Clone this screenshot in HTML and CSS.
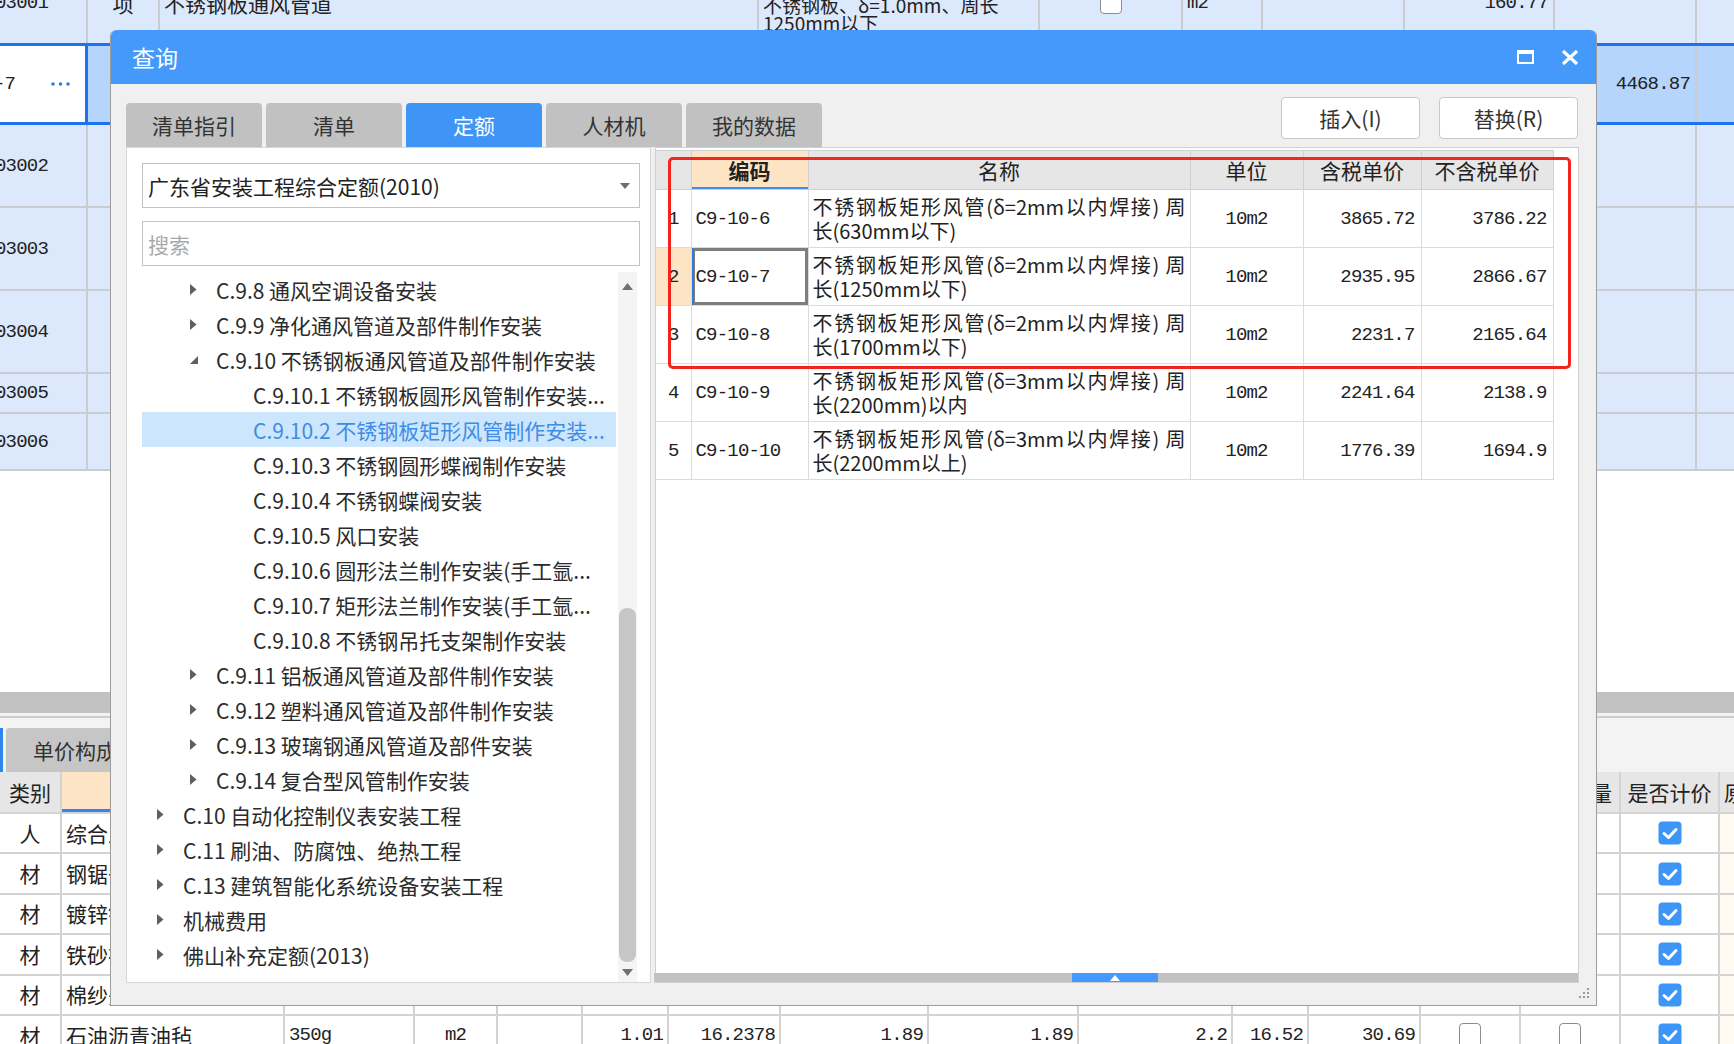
FILE: index.html
```html
<!DOCTYPE html>
<html lang="zh-CN">
<head>
<meta charset="utf-8">
<title>查询</title>
<link rel="stylesheet" href="styles.css">
</head>
<body>
<div class="app">
  <div class="top-grid">
    <div class="trow r0">
      <div class="c c0 m cut">03001</div>
      <div class="c center">项</div>
      <div class="c">不锈钢板通风管道</div>
      <div class="c two"><span>不锈钢板、δ=1.0mm、周长</span><span>1250mm以下</span></div>
      <div class="c center"><span class="cb-empty"></span></div>
      <div class="c m">m2</div>
      <div class="c"></div>
      <div class="c m right">160.77</div>
      <div class="c"></div>
      <div class="c"></div>
    </div>
    <div class="trow r1">
      <div class="c c0 edit"><span class="m cut2">-7</span><svg class="dots" width="19" height="4" viewBox="0 0 19 4"><circle cx="2" cy="2" r="1.8"/><circle cx="9.5" cy="2" r="1.8"/><circle cx="17" cy="2" r="1.8"/></svg></div>
      <div class="c"></div>
      <div class="c"></div>
      <div class="c"></div>
      <div class="c"></div>
      <div class="c"></div>
      <div class="c"></div>
      <div class="c"></div>
      <div class="c m right">4468.87</div>
      <div class="c"></div>
    </div>
    <div class="trow r2">
      <div class="c c0 m cut">03002</div>
      <div class="c"></div><div class="c"></div><div class="c"></div><div class="c"></div><div class="c"></div><div class="c"></div><div class="c"></div><div class="c"></div><div class="c"></div>
    </div>
    <div class="trow r2">
      <div class="c c0 m cut">03003</div>
      <div class="c"></div><div class="c"></div><div class="c"></div><div class="c"></div><div class="c"></div><div class="c"></div><div class="c"></div><div class="c"></div><div class="c"></div>
    </div>
    <div class="trow r2">
      <div class="c c0 m cut">03004</div>
      <div class="c"></div><div class="c"></div><div class="c"></div><div class="c"></div><div class="c"></div><div class="c"></div><div class="c"></div><div class="c"></div><div class="c"></div>
    </div>
    <div class="trow r5">
      <div class="c c0 m cut">03005</div>
      <div class="c"></div><div class="c"></div><div class="c"></div><div class="c"></div><div class="c"></div><div class="c"></div><div class="c"></div><div class="c"></div><div class="c"></div>
    </div>
    <div class="trow r6">
      <div class="c c0 m cut">03006</div>
      <div class="c"></div><div class="c"></div><div class="c"></div><div class="c"></div><div class="c"></div><div class="c"></div><div class="c"></div><div class="c"></div><div class="c"></div>
    </div>
  </div>

  <div class="blank"></div>
  <div class="splitter"></div>

  <div class="lower-tabs">
    <span class="ltab-mark"></span>
    <div class="ltab">单价构成</div>
  </div>

  <div class="bottom-grid">
    <div class="brow bhead">
      <div class="c center">类别</div>
      <div class="c peach"></div>
      <div class="c"></div><div class="c"></div><div class="c"></div><div class="c"></div><div class="c"></div><div class="c"></div><div class="c"></div><div class="c"></div><div class="c"></div><div class="c"></div><div class="c"></div>
      <div class="c qty">锁定数量</div>
      <div class="c center">是否计价</div>
      <div class="c">原价</div>
    </div>
    <div class="brow">
      <div class="c center">人</div><div class="c">综合工日</div>
      <div class="c"></div><div class="c"></div><div class="c"></div><div class="c"></div><div class="c"></div><div class="c"></div><div class="c"></div><div class="c"></div><div class="c"></div><div class="c"></div><div class="c"></div><div class="c"></div>
      <div class="c center"><svg class="cbx" width="24" height="24" viewBox="0 0 24 24"><rect x="0.5" y="0.5" width="23" height="23" rx="4" fill="#3d95f7"/><path d="M6 12.5 L10.5 16.5 L18 8.5" fill="none" stroke="#fff" stroke-width="3" stroke-linecap="round" stroke-linejoin="round"/></svg></div>
      <div class="c tint"></div>
    </div>
    <div class="brow">
      <div class="c center">材</div><div class="c">钢锯条</div>
      <div class="c"></div><div class="c"></div><div class="c"></div><div class="c"></div><div class="c"></div><div class="c"></div><div class="c"></div><div class="c"></div><div class="c"></div><div class="c"></div><div class="c"></div><div class="c"></div>
      <div class="c center"><svg class="cbx" width="24" height="24" viewBox="0 0 24 24"><rect x="0.5" y="0.5" width="23" height="23" rx="4" fill="#3d95f7"/><path d="M6 12.5 L10.5 16.5 L18 8.5" fill="none" stroke="#fff" stroke-width="3" stroke-linecap="round" stroke-linejoin="round"/></svg></div>
      <div class="c tint"></div>
    </div>
    <div class="brow">
      <div class="c center">材</div><div class="c">镀锌铁丝</div>
      <div class="c"></div><div class="c"></div><div class="c"></div><div class="c"></div><div class="c"></div><div class="c"></div><div class="c"></div><div class="c"></div><div class="c"></div><div class="c"></div><div class="c"></div><div class="c"></div>
      <div class="c center"><svg class="cbx" width="24" height="24" viewBox="0 0 24 24"><rect x="0.5" y="0.5" width="23" height="23" rx="4" fill="#3d95f7"/><path d="M6 12.5 L10.5 16.5 L18 8.5" fill="none" stroke="#fff" stroke-width="3" stroke-linecap="round" stroke-linejoin="round"/></svg></div>
      <div class="c tint"></div>
    </div>
    <div class="brow">
      <div class="c center">材</div><div class="c">铁砂布</div>
      <div class="c"></div><div class="c"></div><div class="c"></div><div class="c"></div><div class="c"></div><div class="c"></div><div class="c"></div><div class="c"></div><div class="c"></div><div class="c"></div><div class="c"></div><div class="c"></div>
      <div class="c center"><svg class="cbx" width="24" height="24" viewBox="0 0 24 24"><rect x="0.5" y="0.5" width="23" height="23" rx="4" fill="#3d95f7"/><path d="M6 12.5 L10.5 16.5 L18 8.5" fill="none" stroke="#fff" stroke-width="3" stroke-linecap="round" stroke-linejoin="round"/></svg></div>
      <div class="c tint"></div>
    </div>
    <div class="brow">
      <div class="c center">材</div><div class="c">棉纱头</div>
      <div class="c"></div><div class="c"></div><div class="c"></div><div class="c"></div><div class="c"></div><div class="c"></div><div class="c"></div><div class="c"></div><div class="c"></div><div class="c"></div><div class="c"></div><div class="c"></div>
      <div class="c center"><svg class="cbx" width="24" height="24" viewBox="0 0 24 24"><rect x="0.5" y="0.5" width="23" height="23" rx="4" fill="#3d95f7"/><path d="M6 12.5 L10.5 16.5 L18 8.5" fill="none" stroke="#fff" stroke-width="3" stroke-linecap="round" stroke-linejoin="round"/></svg></div>
      <div class="c tint"></div>
    </div>
    <div class="brow">
      <div class="c center">材</div><div class="c">石油沥青油毡</div>
      <div class="c m">350g</div>
      <div class="c m center">m2</div>
      <div class="c"></div>
      <div class="c m right">1.01</div>
      <div class="c m right">16.2378</div>
      <div class="c m right">1.89</div>
      <div class="c m right">1.89</div>
      <div class="c m right">2.2</div>
      <div class="c m right">16.52</div>
      <div class="c m right">30.69</div>
      <div class="c center"><span class="cb-empty tall"></span></div>
      <div class="c center"><span class="cb-empty tall"></span></div>
      <div class="c center"><svg class="cbx" width="24" height="24" viewBox="0 0 24 24"><rect x="0.5" y="0.5" width="23" height="23" rx="4" fill="#3d95f7"/><path d="M6 12.5 L10.5 16.5 L18 8.5" fill="none" stroke="#fff" stroke-width="3" stroke-linecap="round" stroke-linejoin="round"/></svg></div>
      <div class="c tint"></div>
    </div>
  </div>
</div>

<div class="dialog">
  <div class="titlebar">
    <div class="title">查询</div>
    <svg class="tb-max" width="17" height="14" viewBox="0 0 17 14"><rect x="1" y="2" width="15" height="11" fill="none" stroke="#fff" stroke-width="2"/><rect x="0" y="0" width="17" height="4" fill="#fff"/></svg>
    <svg class="tb-close" width="18" height="15" viewBox="0 0 18 15"><path d="M2 1 L16 14 M16 1 L2 14" stroke="#fff" stroke-width="3.2" stroke-linecap="butt"/></svg>
  </div>
  <div class="dbody">
    <div class="toolbar">
      <div class="tabs">
        <div class="tab">清单指引</div>
        <div class="tab">清单</div>
        <div class="tab active">定额</div>
        <div class="tab">人材机</div>
        <div class="tab">我的数据</div>
      </div>
      <div class="actions">
        <div class="btn">插入(I)</div>
        <div class="btn">替换(R)</div>
      </div>
    </div>
    <div class="main">
      <div class="lpanel">
        <div class="select">
          <span>广东省安装工程综合定额(2010)</span>
          <svg width="10" height="6" viewBox="0 0 10 6"><path d="M0 0 H10 L5 6 Z" fill="#6e6e6e"/></svg>
        </div>
        <div class="search">搜索</div>
        <div class="tree-area">
          <div class="tree">
            <div class="node l2"><span class="arr"><svg width="7" height="11" viewBox="0 0 7 11"><path d="M0 0 L6.5 5.5 L0 11 Z" fill="#5f5f5f"/></svg></span>C.9.8 通风空调设备安装</div>
            <div class="node l2"><span class="arr"><svg width="7" height="11" viewBox="0 0 7 11"><path d="M0 0 L6.5 5.5 L0 11 Z" fill="#5f5f5f"/></svg></span>C.9.9 净化通风管道及部件制作安装</div>
            <div class="node l2"><span class="arr"><svg width="8" height="8" viewBox="0 0 8 8"><path d="M8 0 L8 8 L0 8 Z" fill="#5f5f5f"/></svg></span>C.9.10 不锈钢板通风管道及部件制作安装</div>
            <div class="node l3">C.9.10.1 不锈钢板圆形风管制作安装...</div>
            <div class="node l3 sel">C.9.10.2 不锈钢板矩形风管制作安装...</div>
            <div class="node l3">C.9.10.3 不锈钢圆形蝶阀制作安装</div>
            <div class="node l3">C.9.10.4 不锈钢蝶阀安装</div>
            <div class="node l3">C.9.10.5 风口安装</div>
            <div class="node l3">C.9.10.6 圆形法兰制作安装(手工氩...</div>
            <div class="node l3">C.9.10.7 矩形法兰制作安装(手工氩...</div>
            <div class="node l3">C.9.10.8 不锈钢吊托支架制作安装</div>
            <div class="node l2"><span class="arr"><svg width="7" height="11" viewBox="0 0 7 11"><path d="M0 0 L6.5 5.5 L0 11 Z" fill="#5f5f5f"/></svg></span>C.9.11 铝板通风管道及部件制作安装</div>
            <div class="node l2"><span class="arr"><svg width="7" height="11" viewBox="0 0 7 11"><path d="M0 0 L6.5 5.5 L0 11 Z" fill="#5f5f5f"/></svg></span>C.9.12 塑料通风管道及部件制作安装</div>
            <div class="node l2"><span class="arr"><svg width="7" height="11" viewBox="0 0 7 11"><path d="M0 0 L6.5 5.5 L0 11 Z" fill="#5f5f5f"/></svg></span>C.9.13 玻璃钢通风管道及部件安装</div>
            <div class="node l2"><span class="arr"><svg width="7" height="11" viewBox="0 0 7 11"><path d="M0 0 L6.5 5.5 L0 11 Z" fill="#5f5f5f"/></svg></span>C.9.14 复合型风管制作安装</div>
            <div class="node l1"><span class="arr"><svg width="7" height="11" viewBox="0 0 7 11"><path d="M0 0 L6.5 5.5 L0 11 Z" fill="#5f5f5f"/></svg></span>C.10 自动化控制仪表安装工程</div>
            <div class="node l1"><span class="arr"><svg width="7" height="11" viewBox="0 0 7 11"><path d="M0 0 L6.5 5.5 L0 11 Z" fill="#5f5f5f"/></svg></span>C.11 刷油、防腐蚀、绝热工程</div>
            <div class="node l1"><span class="arr"><svg width="7" height="11" viewBox="0 0 7 11"><path d="M0 0 L6.5 5.5 L0 11 Z" fill="#5f5f5f"/></svg></span>C.13 建筑智能化系统设备安装工程</div>
            <div class="node l1"><span class="arr"><svg width="7" height="11" viewBox="0 0 7 11"><path d="M0 0 L6.5 5.5 L0 11 Z" fill="#5f5f5f"/></svg></span>机械费用</div>
            <div class="node l1"><span class="arr"><svg width="7" height="11" viewBox="0 0 7 11"><path d="M0 0 L6.5 5.5 L0 11 Z" fill="#5f5f5f"/></svg></span>佛山补充定额(2013)</div>
          </div>
          <div class="vscroll">
            <div class="sb-up"><svg width="11" height="7" viewBox="0 0 11 7"><path d="M0 7 L5.5 0 L11 7 Z" fill="#707070"/></svg></div>
            <div class="sb-gap"></div>
            <div class="sb-thumb"></div>
            <div class="sb-down"><svg width="11" height="7" viewBox="0 0 11 7"><path d="M0 0 L11 0 L5.5 7 Z" fill="#707070"/></svg></div>
          </div>
        </div>
      </div>
      <div class="rpanel">
        <div class="grid-area">
          <table class="qt">
            <colgroup><col class="w-no"><col class="w-code"><col class="w-name"><col class="w-unit"><col class="w-p1"><col class="w-p2"></colgroup>
            <thead>
              <tr><th></th><th class="hcode">编码</th><th>名称</th><th>单位</th><th>含税单价</th><th>不含税单价</th></tr>
            </thead>
            <tbody>
              <tr><td class="no m">1</td><td class="m code">C9-10-6</td><td class="name"><span class="l1">不锈钢板矩形风管(δ=2mm以内焊接) 周</span><span>长(630mm以下)</span></td><td class="m unit">10m2</td><td class="m num">3865.72</td><td class="m num">3786.22</td></tr>
              <tr><td class="no m cur">2</td><td class="m code curcell">C9-10-7</td><td class="name"><span class="l1">不锈钢板矩形风管(δ=2mm以内焊接) 周</span><span>长(1250mm以下)</span></td><td class="m unit">10m2</td><td class="m num">2935.95</td><td class="m num">2866.67</td></tr>
              <tr><td class="no m">3</td><td class="m code">C9-10-8</td><td class="name"><span class="l1">不锈钢板矩形风管(δ=2mm以内焊接) 周</span><span>长(1700mm以下)</span></td><td class="m unit">10m2</td><td class="m num">2231.7</td><td class="m num">2165.64</td></tr>
              <tr><td class="no m">4</td><td class="m code">C9-10-9</td><td class="name"><span class="l1">不锈钢板矩形风管(δ=3mm以内焊接) 周</span><span>长(2200mm)以内</span></td><td class="m unit">10m2</td><td class="m num">2241.64</td><td class="m num">2138.9</td></tr>
              <tr><td class="no m">5</td><td class="m code">C9-10-10</td><td class="name"><span class="l1">不锈钢板矩形风管(δ=3mm以内焊接) 周</span><span>长(2200mm以上)</span></td><td class="m unit">10m2</td><td class="m num">1776.39</td><td class="m num">1694.9</td></tr>
            </tbody>
          </table>
        </div>
        <div class="hscroll"><div class="hs-gap"></div><div class="hs-thumb"><svg width="10" height="6" viewBox="0 0 10 6"><path d="M0 6 L5 0 L10 6 Z" fill="#fff"/></svg></div></div>
      </div>
    </div>
    <svg class="grip" width="12" height="12" viewBox="0 0 12 12"><g fill="#9a9a9a"><rect x="9" y="1" width="2" height="2"/><rect x="9" y="5" width="2" height="2"/><rect x="5" y="5" width="2" height="2"/><rect x="9" y="9" width="2" height="2"/><rect x="5" y="9" width="2" height="2"/><rect x="1" y="9" width="2" height="2"/></g></svg>
  </div>
  <div class="redbox"></div>
</div>
</body>
</html>
```

FILE: styles.css
```css
* { box-sizing: border-box; }
html, body { margin: 0; padding: 0; }
body {
  width: 1734px;
  height: 1044px;
  overflow: hidden;
  position: relative;
  background: #ffffff;
  font-family: "Noto Sans CJK SC", "Noto Sans", sans-serif;
  color: #222222;
}
.m {
  font-family: "Liberation Mono", "Noto Sans CJK SC", monospace;
  font-size: 19px;
  letter-spacing: -0.8px;
}
.center { justify-content: center; text-align: center; }
.right { justify-content: flex-end; text-align: right; }

/* ===== background upper grid ===== */
.top-grid { margin-top: -37px; }
.trow {
  display: grid;
  grid-template-columns: 88px 72px 599px 281px 143px 80px 142px 150px 142px 1fr;
  background: #dce8fb;
  border-bottom: 2px solid #c9cdd3;
  font-size: 21px;
}
.trow .c {
  border-right: 2px solid #c9cdd3;
  display: flex;
  align-items: center;
  padding: 0 4px;
  overflow: hidden;
  white-space: nowrap;
}
.trow .c:last-child { border-right: none; }
.trow .c.m { font-size: 19px; }
.trow .c.right { padding-right: 5px; }
.trow .cut { padding-left: 0; text-indent: -5px; }
.trow .two {
  flex-direction: column;
  align-items: flex-start;
  justify-content: flex-end;
  padding-bottom: 11px;
  line-height: 18px;
  font-size: 19px;
}
.r0 { height: 80px; border-bottom: none; }
.r1 {
  height: 82px;
  border-top: 3px solid #1f72ef;
  border-bottom: 3px solid #1f72ef;
  background: #b5d5fc;
}
.r1 .c0.edit {
  background: #ffffff;
  border-right: 3px solid #1f72ef;
  padding: 0;
  justify-content: space-between;
}
.cut2 { margin-left: -6px; }
.dots { fill: #2f7ae2; margin-right: 15px; }
.r2 { height: 83px; }
.r5 { height: 40px; }
.r6 { height: 57px; }
.cb-empty {
  display: inline-block;
  width: 22px;
  height: 22px;
  background: #ffffff;
  border: 1.5px solid #8c8c8c;
  border-radius: 4px;
}
.cb-empty.tall { width: 22px; height: 25px; }

.blank { height: 221px; }
.splitter {
  height: 26px;
  background: linear-gradient(to bottom, #c2c2c2 0, #c2c2c2 21px, #f2f2f2 21px, #f2f2f2 24px, #cdcdcd 24px);
}
.lower-tabs {
  height: 54px;
  background: #f3f3f3;
  display: flex;
  align-items: flex-end;
}
.ltab-mark { width: 3px; height: 44px; background: #2f86f0; }
.ltab {
  margin-left: 3px;
  width: 140px;
  height: 44px;
  background: #c6c6c6;
  border-radius: 3px 3px 0 0;
  font-size: 21px;
  color: #333;
  display: flex;
  align-items: center;
  padding-left: 27px;
}

/* ===== background lower grid ===== */
.brow {
  display: grid;
  grid-template-columns: 62px 223px 130px 83px 85px 86px 112px 148px 150px 154px 76px 112px 100px 100px 99px 1fr;
  height: 40.4px;
  border-bottom: 2px solid #d3d3d3;
  font-size: 21px;
  background: #ffffff;
}
.brow .c {
  border-right: 2px solid #d3d3d3;
  display: flex;
  align-items: center;
  padding: 0 4px;
  overflow: hidden;
  white-space: nowrap;
  line-height: 1;
}
.brow .c:last-child { border-right: none; }
.brow .c.right { padding-right: 4px; }
.bhead { height: 42px; background: #e6e6e6; border-bottom: 2px solid #d3d3d3; }
.bhead .peach { background: #fde4c4; box-shadow: inset 0 -3px 0 #2f86f0; }
.bhead .qty { justify-content: flex-end; padding-right: 7px; }
.tint { background: #fffaf2; }
.bhead .tint { background: #e6e6e6; }
.cbx { display: block; }

/* ===== dialog ===== */
.dialog {
  position: absolute;
  left: 110px;
  top: 30px;
  width: 1487px;
  height: 976px;
  background: #f0f0f0;
  border: 1px solid #9d9d9d;
  border-top: none;
  border-radius: 6px 6px 0 0;
  display: flex;
  flex-direction: column;
}
.titlebar {
  height: 54px;
  flex: none;
  background: #4599fb;
  border-radius: 6px 6px 0 0;
  display: flex;
  align-items: center;
  padding: 0 17px 0 21px;
  color: #ffffff;
}
.title { flex: 1; font-size: 23px; }
.tb-max { margin-right: 27px; }
.dbody {
  flex: 1;
  display: flex;
  flex-direction: column;
  padding: 13px 17px 22px 15px;
  position: relative;
}
.toolbar {
  height: 50px;
  flex: none;
  display: flex;
  justify-content: space-between;
}
.tabs { display: flex; gap: 4px; align-self: flex-end; }
.tab {
  width: 136px;
  height: 44px;
  background: #c1c1c1;
  border-radius: 4px 4px 0 0;
  font-size: 21px;
  color: #333333;
  display: flex;
  align-items: center;
  justify-content: center;
}
.tab.active { background: #3e95f6; color: #ffffff; }
.actions { display: flex; gap: 19px; align-self: flex-start; margin-right: 1px; }
.btn {
  width: 139px;
  height: 42px;
  background: #ffffff;
  border: 1px solid #c8c8c8;
  border-radius: 4px;
  font-size: 21px;
  color: #333333;
  display: flex;
  align-items: center;
  justify-content: center;
}
.main { flex: 1; display: flex; gap: 4px; min-height: 0; }

.lpanel {
  width: 525px;
  flex: none;
  background: #ffffff;
  border: 1px solid #d7d7d7;
  padding: 15px 10px 0 15px;
  display: flex;
  flex-direction: column;
}
.select, .search {
  height: 45px;
  border: 1px solid #c2c2c2;
  font-size: 21px;
  display: flex;
  align-items: center;
  padding: 0 9px 0 5px;
  flex: none;
}
.select { justify-content: space-between; color: #222; }
.search { margin-top: 13px; color: #a9a9a9; }
.tree-area { flex: 1; display: flex; margin-top: 6px; min-height: 0; }
.tree { flex: 1; }
.node {
  height: 35px;
  display: flex;
  align-items: center;
  font-size: 21px;
  color: #2b2b2b;
  white-space: nowrap;
  overflow: hidden;
}
.node .arr { width: 26px; flex: none; display: flex; align-items: center; }
.node.l1 { padding-left: 15px; }
.node.l2 { padding-left: 48px; }
.node.l3 { padding-left: 111px; }
.node.sel { background: #cce6fd; color: #3f8ce6; }
.vscroll {
  width: 19px;
  flex: none;
  margin-left: 2px;
  margin-right: 3px;
  background: #f4f4f4;
  display: flex;
  flex-direction: column;
}
.sb-up { height: 18px; display: flex; align-items: flex-end; justify-content: center; }
.sb-gap { height: 318px; }
.sb-thumb { height: 354px; margin: 0 1px; background: #c6c6c6; border-radius: 8px; }
.sb-down { flex: 1; display: flex; align-items: center; justify-content: center; }

.rpanel {
  flex: 1;
  background: #ffffff;
  border: 1px solid #cfcfcf;
  padding-top: 2px;
  display: flex;
  flex-direction: column;
  min-width: 0;
}
.grid-area { flex: 1; }
.qt {
  width: 897px;
  table-layout: fixed;
  border-collapse: collapse;
}
.w-no { width: 35px; }
.w-code { width: 117px; }
.w-name { width: 382px; }
.w-unit { width: 113px; }
.w-p1 { width: 118px; }
.w-p2 { width: 132px; }
.qt th {
  height: 39px;
  background: #e6e6e6;
  border: 1px solid #d0d0d0;
  font-size: 21px;
  font-weight: normal;
  color: #222;
  padding: 0;
  text-align: center;
}
.qt th:first-child { border-left: none; }
.qt th.hcode { background: #fde4c4; font-weight: bold; box-shadow: inset 0 -2px 0 #3d8ef0; }
.qt td {
  height: 58px;
  border: 1px solid #dcdcdc;
  padding: 0;
  color: #222;
  text-align: left;
}
.qt td:first-child { border-left: none; }
.qt td.no { text-align: center; }
.qt td.no.cur { background: #fde4c4; }
.qt td.code { padding-left: 4px; }
.qt td.curcell { box-shadow: inset 2px 0 0 #2a7af0, inset 0 0 0 3px #7e7e7e; }
.qt td.name { padding: 0 4px; font-size: 20px; line-height: 24px; }
.qt td.name span { display: block; white-space: nowrap; }
.qt td.name span.l1 { text-align: justify; text-align-last: justify; }
.qt td.unit { text-align: center; }
.qt td.num { text-align: right; padding-right: 6px; }

.hscroll { height: 9px; flex: none; background: #c2c2c2; display: flex; margin-left: -2px; }
.hs-gap { width: 418px; }
.hs-thumb { width: 86px; background: #4499ff; display: flex; align-items: flex-end; justify-content: center; }
.hs-thumb svg { display: block; margin-bottom: 1px; }

.grip { position: absolute; right: 6px; bottom: 6px; }
.redbox {
  position: absolute;
  left: 557px;
  top: 127px;
  width: 903px;
  height: 212px;
  border: 3px solid #f3231d;
  border-radius: 5px;
  pointer-events: none;
}
```
